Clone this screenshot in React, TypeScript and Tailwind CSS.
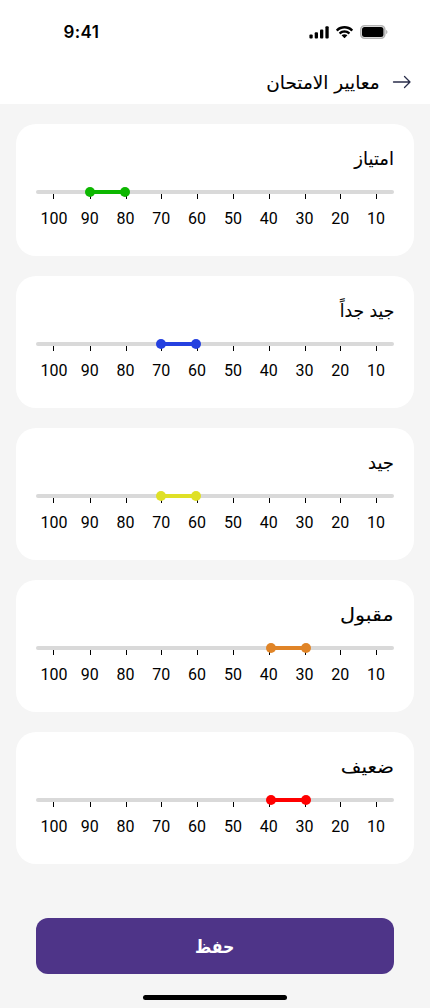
import React from "react";

type Grade = { name: string; start: number; bar: string; dot: string; fit: string };

const grades: Grade[] = [
  { name: "امتياز", start: 49, bar: "bg-[#0db700]", dot: "bg-[#0db700]", fit: "scale-x-100" },
  { name: "جيد جداً", start: 120, bar: "bg-[#2541e0]", dot: "bg-[#2541e0]", fit: "scale-x-[0.95]" },
  { name: "جيد", start: 120, bar: "bg-[#dfe026]", dot: "bg-[#dfe026]", fit: "scale-x-100" },
  { name: "مقبول", start: 230, bar: "bg-[#e08427]", dot: "bg-[#e08427]", fit: "scale-x-[1.15]" },
  { name: "ضعيف", start: 230, bar: "bg-[#ff0000]", dot: "bg-[#ff0000]", fit: "scale-x-[1.11]" },
];

const marks = [100, 90, 80, 70, 60, 50, 40, 30, 20, 10];
const tickOffsets = [17, 54, 90, 125, 161, 197, 233, 269, 304, 340];

function Scale({ grade }: { grade: Grade }) {
  return (
    <div dir="ltr">
      <div className="relative h-1 rounded-full bg-[#d9d9d9]">
        {tickOffsets.map((x) => (
          <span key={x} className="absolute top-1 h-[5px] w-px bg-black" style={{ left: x }} />
        ))}
        <div className="absolute -top-[3px] flex h-[10px] w-[45px] items-center" style={{ left: grade.start }}>
          <span className={`size-[10px] shrink-0 rounded-full ${grade.dot}`} />
          <span className={`-mx-1 h-1 grow ${grade.bar}`} />
          <span className={`size-[10px] shrink-0 rounded-full ${grade.dot}`} />
        </div>
      </div>
      <div className="mt-[15px] grid grid-cols-10 text-center font-['Roboto',sans-serif] text-base leading-[19px] text-black">
        {marks.map((m) => (
          <span key={m}>{m}</span>
        ))}
      </div>
    </div>
  );
}

function StatusBar() {
  return (
    <div dir="ltr" className="flex h-16 items-center justify-between pl-[63.5px] pr-[42px]">
      <span className="font-['Inter',sans-serif] text-[17px] font-semibold leading-[22px] tracking-[0.4px] text-black">9:41</span>
      <div className="flex items-center gap-[7px]">
        <svg width="20" height="13" viewBox="0 0 20 13">
          <rect x="0.4" y="8.5" width="3.3" height="4" rx="1" />
          <rect x="5.7" y="6.3" width="3.3" height="6.2" rx="1" />
          <rect x="11" y="3.5" width="3.3" height="9" rx="1" />
          <rect x="16.4" y="0.3" width="3.3" height="12.2" rx="1" />
        </svg>
        <svg width="17" height="13" viewBox="0 0 17 13">
          <path d="M8.5 2.6c2.5 0 4.8.9 6.6 2.6.1.1.3.1.5 0l1.3-1.3a.4.4 0 0 0 0-.5C12.200-1 4.800-1 .1 3.400a.4.4 0 0 0 0 .5l1.300 1.300c.1.100.300.100.500 0 1.800-1.700 4.100-2.600 6.600-2.600z" />
          <path d="M8.500 6.800c1.400 0 2.700.500 3.700 1.400.1.100.300.100.500 0l1.300-1.300a.4.4 0 0 0 0-.500C10.900 3.600 6.100 3.600 3 6.400a.4.4 0 0 0 0 .500l1.300 1.300c.2.100.400.100.500 0 1-.9 2.300-1.400 3.700-1.400z" />
          <path d="M11.200 9.600c.1-.100.100-.300 0-.500-1.600-1.300-3.800-1.300-5.400 0a.4.4 0 0 0 0 .500l2.400 2.400c.2.200.400.200.600 0z" />
        </svg>
        <svg width="28" height="14" viewBox="0 0 28 14">
          <rect x="0.800" y="0.800" width="24" height="12.400" rx="3.800" fill="none" stroke="#b3b3b3" strokeWidth="1.600" />
          <path d="M26.200 5v4c.7-.3 1.200-1.100 1.200-2s-.5-1.700-1.200-2z" fill="#aaa" />
          <rect x="2" y="2" width="21.500" height="10" rx="2.500" />
        </svg>
      </div>
    </div>
  );
}

export default function App() {
  return (
    <div dir="rtl" className="flex h-[1008px] w-full flex-col bg-[#f5f5f5] font-['DejaVu_Sans',sans-serif] text-black">
      <header className="h-[104px] bg-white">
        <StatusBar />
        <div className="flex h-9 items-center gap-[12px] pr-[18px]">
          <svg width="20" height="14" viewBox="0 0 20 14" fill="none" stroke="#292d4a" strokeWidth="1.300" strokeLinecap="round" strokeLinejoin="round">
            <path d="M1.500 7h16.500M12.500 1.500 18 7l-5.500 5.500" />
          </svg>
          <h1 className="origin-right scale-x-[1.025] whitespace-nowrap pt-0.5 text-[18px] leading-9 [-webkit-text-stroke:0.1px_black]">معايير الامتحان</h1>
        </div>
      </header>
      <main className="flex flex-col gap-5 px-4 pt-5">
        {grades.map((g) => (
          <section key={g.name} className="h-[132px] rounded-[20px] bg-white px-5 pt-[18px]">
            <h2 className="flex h-12 pt-px text-[18px] leading-8 [-webkit-text-stroke:0.1px_black]">
              <span className={`inline-block origin-right whitespace-nowrap ${g.fit}`}>{g.name}</span>
            </h2>
            <Scale grade={g} />
          </section>
        ))}
      </main>
      <div className="px-9 pt-[54px]">
        <button className="flex h-14 w-full items-center justify-center rounded-xl bg-[#4e3488] text-[18px] font-bold text-white">
          <span className="inline-block scale-x-[0.87]">حفظ</span>
        </button>
      </div>
      <div className="mt-[21px] h-[5px] w-36 self-center rounded-full bg-black" />
    </div>
  );
}
